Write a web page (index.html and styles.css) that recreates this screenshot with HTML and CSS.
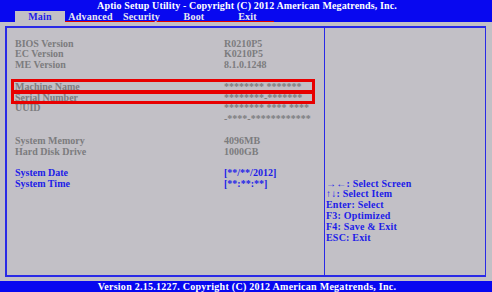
FILE: index.html
```html
<!DOCTYPE html>
<html lang="en">
<head>
    <meta charset="UTF-8">
    <meta name="viewport" content="width=device-width, initial-scale=1.0">
    <title>Aptio Setup Utility - Main</title>
    <link rel="stylesheet" href="styles.css">
</head>
<body>
    <header class="top">
        <div class="title">Aptio Setup Utility - Copyright (C) 2012 American Megatrends, Inc.</div>
        <nav class="tabs">
            <span class="tab active">Main</span>
            <span class="tab">Advanced</span>
            <span class="tab">Security</span>
            <span class="tab">Boot</span>
            <span class="tab">Exit</span>
        </nav>
    </header>

    <main class="frame">
        <section class="info">
            <div class="row"><span>BIOS Version</span><span>R0210P5</span></div>
            <div class="row"><span>EC Version</span><span>K0210P5</span></div>
            <div class="row"><span>ME Version</span><span>8.1.0.1248</span></div>
            <div class="row"></div>
            <div class="row"><span>Machine Name</span><span>******** *******</span></div>
            <div class="row"><span>Serial Number</span><span>********-*******</span></div>
            <div class="row"><span>UUID</span><span>******** **** ****</span></div>
            <div class="row"><span></span><span>-****-************</span></div>
            <div class="row"></div>
            <div class="row"><span>System Memory</span><span>4096MB</span></div>
            <div class="row"><span>Hard Disk Drive</span><span>1000GB</span></div>
            <div class="row"></div>
            <div class="row edit"><span>System Date</span><span>[**/**/2012]</span></div>
            <div class="row edit"><span>System Time</span><span>[**:**:**]</span></div>

            <!-- highlight marks drawn over the two rows -->
            <div class="mark mark-name"></div>
            <div class="mark mark-serial"></div>
        </section>

        <aside class="help">
            <div>→←: Select Screen</div>
            <div>↑↓: Select Item</div>
            <div>Enter: Select</div>
            <div>F3: Optimized</div>
            <div>F4: Save &amp; Exit</div>
            <div>ESC: Exit</div>
        </aside>
    </main>

    <footer class="bottom">Version 2.15.1227. Copyright (C) 2012 American Megatrends, Inc.</footer>
</body>
</html>
```

FILE: styles.css
```css
* {
    box-sizing: border-box;
}
html, body {
    margin: 0;
    height: 292px;
    overflow: hidden;
}
body {
    font-family: "Liberation Serif", serif;
    font-weight: bold;
    font-size: 10px;
    background: #c2c0c6;
    display: flex;
    flex-direction: column;
}
.top {
    background: #0808f0;
    color: white;
    height: 22px;
}
.title {
    height: 11px;
    line-height: 11px;
    text-align: center;
    padding-left: 2px;
    letter-spacing: 0.14px;
}
.tabs {
    display: grid;
    grid-template-columns: 50px 51px 51px 54px 53px;
    margin-left: 15px;
    height: 11px;
}
.tab {
    height: 11px;
    line-height: 11px;
    text-align: center;
    color: #e8e8f0;
    letter-spacing: 0.2px;
    border-bottom: 1px solid #e00000;
}
.tab.active {
    background: #c2c0c6;
    color: #1c1ce8;
    border-bottom: none;
}
.frame {
    display: flex;
    margin: 4px 6px 0 5px;
    height: 251px;
    border: 2px solid #2a2ae6;
    border-right-width: 1px;
}
.info {
    position: relative;
    width: 318px;
    border-right: 1px solid #2a2ae6;
    padding: 10.6px 0 0 8px;
}
.row {
    display: grid;
    grid-template-columns: 209px auto;
    height: 10.8px;
    line-height: 10.8px;
    color: #7c7c7e;
    white-space: nowrap;
}
.row.edit {
    color: #1c1ce8;
}
.mark {
    position: absolute;
    left: 4px;
    width: 304px;
    border: 3px solid #e80000;
}
.mark-name {
    top: 51px;
    height: 14px;
}
.mark-serial {
    top: 63px;
    height: 13px;
}
.help {
    flex: 1;
    padding: 150.6px 0 0 1px;
    color: #1c1ce8;
    line-height: 10.8px;
    letter-spacing: 0.2px;
    white-space: nowrap;
}
.bottom {
    margin-top: 4px;
    height: 11px;
    line-height: 11px;
    background: #0808f0;
    color: white;
    text-align: center;
    padding-left: 2px;
    letter-spacing: 0.27px;
}
```
